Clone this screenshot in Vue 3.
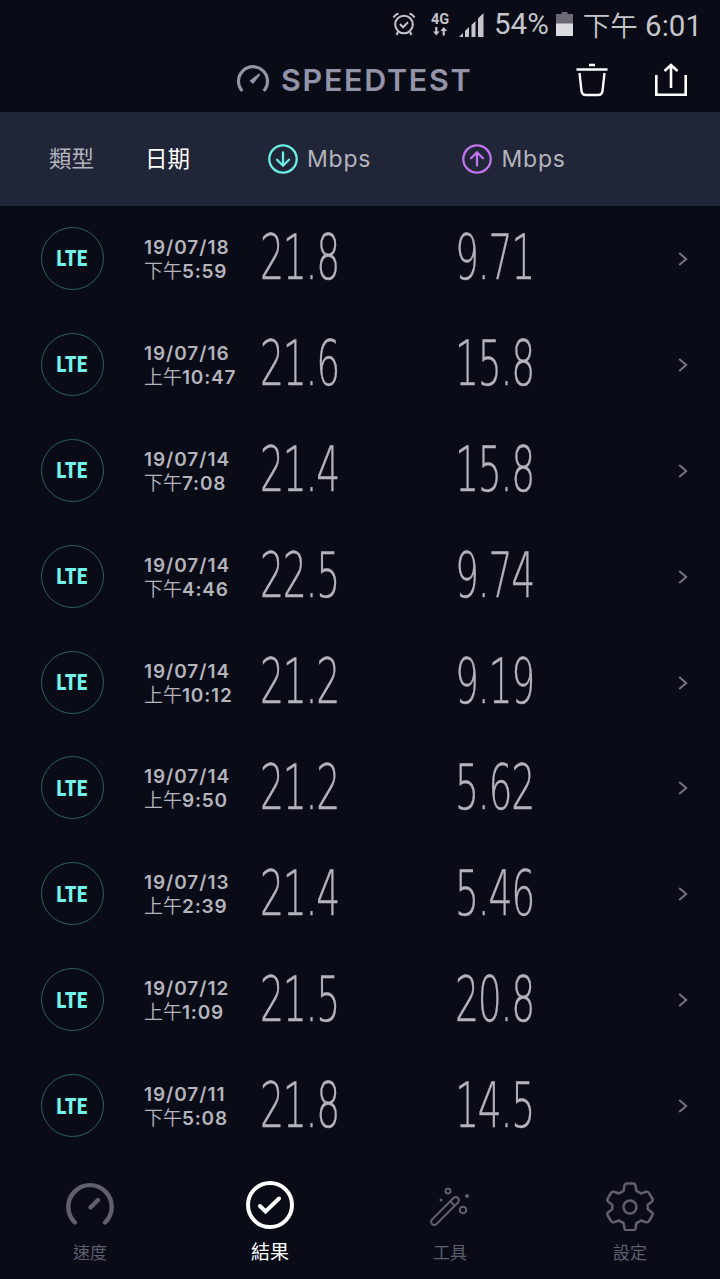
<template>
  <div class="screen">
    <div class="status-bar">
      <svg class="alarm" width="24" height="26" viewBox="0 0 24 26" fill="none" stroke="currentColor" stroke-width="2">
        <circle cx="12" cy="13.5" r="8.8" />
        <path d="M8 13l3 3.2 5-5" />
        <path d="M1.5 6.5Q3 3.5 6.500 2.500M22.500 6.500Q21 3.500 17.500 2.500M6 21l-1.500 3M18 21l1.500 3" />
      </svg>
      <div class="network">
        <span class="network-type">4G</span>
        <svg width="16" height="9" viewBox="0 0 16 9" fill="currentColor">
          <path d="M3.200 0h2.200v4.500h2.200L4.300 8.500 1 4.500h2.200zM10.600 8.500h2.200V4h2.200L11.700 0 8.400 4h2.200z" />
        </svg>
      </div>
      <svg class="signal" width="25" height="25" viewBox="0 0 25 25" fill="currentColor">
        <path d="M0 25l4-4v4zM6 25v-6l4-4v10zM12.500 25V13l4-4v16zM19 25V6.500L24.500 1v24z" />
      </svg>
      <span class="battery-level">54%</span>
      <svg class="battery" width="17" height="25" viewBox="0 0 17 25">
        <path fill="#6b6b75" d="M5.500 0h6v2H17v10H0V2h5.500z" />
        <path fill="#dcdce0" d="M0 11.500h17V24H0z" />
      </svg>
      <span class="clock"><span class="clock-zh">下午</span> 6:01</span>
    </div>

    <header class="app-bar">
      <div class="brand">
        <svg width="34" height="30" viewBox="0 0 34 30" fill="none">
          <path d="M6.300 26A14.500 14.500 0 1 1 27.700 26" stroke="currentColor" stroke-width="3.200" />
          <path fill="currentColor" d="M23 8.500l1.300 1.300-7.300 9.200-3.500-3.300z" />
        </svg>
        <span class="brand-name">SPEEDTEST</span>
      </div>
      <svg class="trash" width="32" height="34" viewBox="0 0 32 34" fill="none" stroke="currentColor" stroke-width="2.300">
        <path d="M13 2h6M0.500 6.500h31" />
        <path d="M3.500 10l2 18Q6 32 10 32h12Q26 32 26.500 28l2-18" />
      </svg>
      <svg class="share" width="34" height="34" viewBox="0 0 34 34" fill="none" stroke="currentColor" stroke-width="2.600">
        <path d="M2.300 12v19.700h29.400V12M17 25V2.500M10.500 8L17 2l6.500 6" />
      </svg>
    </header>

    <div class="columns">
      <span class="col-type">類型</span>
      <span class="col-date">日期</span>
      <div class="col-down">
        <svg class="down" width="30" height="30" viewBox="0 0 30 30" fill="none" stroke="currentColor" stroke-width="2.300">
          <circle cx="15" cy="15" r="13.700" />
          <path stroke-linecap="round" d="M15 8.500v13M9 15.700l6 6 6-6" />
        </svg>
        <span class="unit">Mbps</span>
      </div>
      <div class="col-up">
        <svg class="up" width="30" height="30" viewBox="0 0 30 30" fill="none" stroke="currentColor" stroke-width="2.300">
          <circle cx="15" cy="15" r="13.700" />
          <path stroke-linecap="round" d="M15 21.500v-13M9 14.300l6-6 6 6" />
        </svg>
        <span class="unit">Mbps</span>
      </div>
    </div>

    <div class="results">
      <div v-for="item in results" :key="item.date + item.time" class="result">
        <div class="badge"><span class="badge-text">LTE</span></div>
        <div class="when">
          <div class="date">{{ item.date }}</div>
          <div><span class="period">{{ item.period }}</span>{{ item.time }}</div>
        </div>
        <div class="speed"><span class="value">{{ item.down }}</span></div>
        <div class="speed"><span class="value">{{ item.up }}</span></div>
        <svg class="chevron" width="10" height="14" viewBox="0 0 10 14" fill="none" stroke="currentColor" stroke-width="2">
          <path d="M1.200 1l7 6-7 6" />
        </svg>
      </div>
    </div>

    <nav class="tabs">
      <div class="tab">
        <svg width="50" height="50" viewBox="0 0 50 50" fill="none" stroke="currentColor" stroke-linecap="round" stroke-width="4.400">
          <path d="M10 41.500A21.700 21.700 0 1 1 40 41.500" />
          <path d="M25.500 26.500l7.500-7.500" />
        </svg>
        <span>速度</span>
      </div>
      <div class="tab active">
        <svg width="50" height="50" viewBox="0 0 50 50" fill="none" stroke="currentColor" stroke-linecap="round">
          <circle cx="25" cy="24" r="22" stroke-width="4" />
          <path stroke-width="4" stroke-linejoin="miter" d="M15 25l5.500 5.500L34 17.500" />
        </svg>
        <span>結果</span>
      </div>
      <div class="tab">
        <svg width="50" height="50" viewBox="0 0 50 50" fill="none" stroke="currentColor" stroke-width="2">
          <path d="M7 38.500L28.500 17a3 3 0 0 1 4.500 4.500L11.500 43a3 3 0 0 1-4.500-4.500zM25.500 20.500l4 4" />
          <circle cx="23" cy="10" r="2.500" />
          <circle cx="38" cy="29" r="3.300" />
          <circle cx="42" cy="15" r="2" fill="currentColor" stroke="none" />
          <circle cx="16" cy="19" r="1.500" fill="currentColor" stroke="none" />
        </svg>
        <span>工具</span>
      </div>
      <div class="tab">
        <svg width="50" height="50" viewBox="0 0 50 50" fill="none" stroke="currentColor" stroke-width="2.500" stroke-linejoin="round">
          <path d="M19.500 4.500Q20 2.500 22 2.500h6Q30 2.500 30.500 4.500L31.500 10Q34 11 36 12.500L41 10.800Q43 10.200 44 12L47.300 17.500Q48.300 19.500 46.700 20.800L42.500 24Q43 26 42.500 28L46.700 31.200Q48.300 32.500 47.300 34.500L44 40Q43 41.800 41 41.200L36 39.500Q34 41 31.500 42L30.500 47.500Q30 49.300 28 49.300h-6Q20 49.300 19.500 47.500L18.500 42Q16 41 14 39.500L9 41.200Q7 41.800 6 40L2.700 34.500Q1.700 32.500 3.300 31.200L7.500 28Q7 26 7.500 24L3.300 20.800Q1.700 19.500 2.700 17.500L6 12Q7 10.200 9 10.800L14 12.500Q16 11 18.500 10z" />
          <circle cx="25" cy="26" r="6.500" />
        </svg>
        <span>設定</span>
      </div>
    </nav>
  </div>
</template>

<script setup>
const results = [
  {date: '19/07/18', period: '下午', time: '5:59', down: '21.8', up: '9.71'},
  {date: '19/07/16', period: '上午', time: '10:47', down: '21.6', up: '15.8'},
  {date: '19/07/14', period: '下午', time: '7:08', down: '21.4', up: '15.8'},
  {date: '19/07/14', period: '下午', time: '4:46', down: '22.5', up: '9.74'},
  {date: '19/07/14', period: '上午', time: '10:12', down: '21.2', up: '9.19'},
  {date: '19/07/14', period: '上午', time: '9:50', down: '21.2', up: '5.62'},
  {date: '19/07/13', period: '上午', time: '2:39', down: '21.4', up: '5.46'},
  {date: '19/07/12', period: '上午', time: '1:09', down: '21.5', up: '20.8'},
  {date: '19/07/11', period: '下午', time: '5:08', down: '21.8', up: '14.5'},
]
</script>

<style>
body {
  background: #090b17;
}
</style>

<style scoped>
.screen {
  display: flex;
  flex-direction: column;
  width: 720px;
  height: 1279px;
  overflow: hidden;
  background: #090b17;
  color: #b4b4bc;
  font-family: Inter, "Noto Sans CJK TC", sans-serif;
}

.screen svg {
  display: block;
  flex-shrink: 0;
}

.status-bar {
  display: flex;
  align-items: center;
  justify-content: flex-end;
  height: 48px;
  padding-right: 18px;
  box-sizing: border-box;
  color: #c5c5ca;
  font-family: Roboto, "Noto Sans CJK TC", sans-serif;
  font-size: 29.500px;
  white-space: nowrap;
}

.network {
  display: flex;
  flex-direction: column;
  align-items: center;
  width: 20px;
  margin-left: 14px;
}

.network-type {
  font-size: 14.5px;
  font-weight: 700;
  line-height: 14px;
}

.signal {
  margin-left: 9px;
}

.battery-level {
  margin-left: 10px;
}

.battery {
  margin-left: 7px;
}

.clock {
  margin-left: 10px;
}

.clock-zh {
  font-size: 27.500px;
  font-weight: 350;
}

.app-bar {
  display: flex;
  align-items: center;
  height: 64px;
  padding: 0 32px 0 236px;
}

.brand {
  display: flex;
  align-items: center;
  gap: 11px;
  width: 340px;
  color: #9494a8;
}

.brand-name {
  padding-bottom: 2px;
  font-size: 30.500px;
  font-weight: 600;
  letter-spacing: 1.700px;
}

.trash,
.share {
  color: #fff;
}

.share {
  margin-left: 46px;
}

.columns {
  display: flex;
  align-items: center;
  height: 93.500px;
  padding-left: 49px;
  background: #212538;
  font-size: 22.500px;
}

.col-type,
.col-date {
  padding-bottom: 3px;
}

.col-type {
  width: 96px;
}

.col-date {
  width: 122.500px;
  color: #fff;
}

.col-down,
.col-up {
  display: flex;
  align-items: center;
  gap: 9.500px;
  width: 194.500px;
}

.down {
  color: #6beee6;
}

.up {
  color: #c074ee;
}

.unit {
  font-size: 23px;
  letter-spacing: 0.800px;
}

.result {
  display: flex;
  align-items: center;
  height: 105.900px;
  padding-left: 40.500px;
}

.badge {
  display: flex;
  align-items: center;
  justify-content: center;
  width: 63px;
  height: 63px;
  box-sizing: border-box;
  border: 1px solid #2f6166;
  border-radius: 50%;
}

.badge-text {
  padding-top: 1px;
  color: #74f5ec;
  font-family: Roboto, sans-serif;
  font-size: 22px;
  font-weight: 900;
  letter-spacing: 0.800px;
  transform: scaleX(0.820);
}

.when {
  width: 116px;
  margin-left: 40.500px;
  padding-top: 3px;
  font-size: 19px;
  font-weight: 600;
  line-height: 24px;
  letter-spacing: 0.800px;
  white-space: nowrap;
}

.date {
  letter-spacing: 0.950px;
}

.period {
  font-size: 19px;
  font-weight: 350;
  letter-spacing: 0;
}

.speed {
  width: 194.500px;
}

.value {
  display: inline-block;
  font-family: "DejaVu Sans Light", "DejaVu Sans", sans-serif;
  font-size: 63px;
  font-weight: 200;
  line-height: 64px;
  letter-spacing: -2.200px;
  -webkit-text-stroke: 0.400px currentColor;
  transform: scaleX(0.600);
  transform-origin: left;
}

.chevron {
  margin-left: 28.500px;
  margin-top: 1px;
  color: #747480;
}

.tabs {
  display: flex;
  flex: 1;
  padding-top: 22px;
}

.tab {
  display: flex;
  flex-direction: column;
  align-items: center;
  width: 180px;
  color: #5f5f70;
  font-size: 17px;
}

.tab span {
  margin-top: 8px;
}

.tab.active {
  color: #fff;
  font-size: 19px;
}

.tab.active span {
  margin-top: 6px;
}
</style>
